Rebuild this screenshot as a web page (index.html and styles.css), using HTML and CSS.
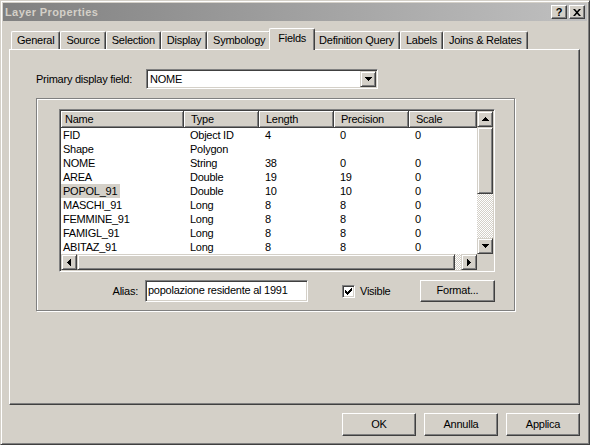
FILE: index.html
```html
<!DOCTYPE html>
<html>
<head>
<meta charset="utf-8">
<title>Layer Properties</title>
<link rel="stylesheet" href="styles.css">
</head>
<body>
<div class="window">
  <div class="titlebar">
    <span class="title">Layer Properties</span>
    <div class="caption-buttons">
      <div class="cap-btn help">?</div>
      <div class="cap-btn">
        <svg width="8" height="7" viewBox="0 0 8 7"><path d="M0 0h2l2 2.2 2-2.2h2L5 3.5 8 7H6L4 4.8 2 7H0l3-3.5z" fill="#000"/></svg>
      </div>
    </div>
  </div>

  <div class="tabbar">
    <div class="tab">General</div>
    <div class="tab">Source</div>
    <div class="tab">Selection</div>
    <div class="tab">Display</div>
    <div class="tab">Symbology</div>
    <div class="tab selected">Fields</div>
    <div class="tab">Definition Query</div>
    <div class="tab">Labels</div>
    <div class="tab">Joins &amp; Relates</div>
  </div>

  <div class="panel">
    <div class="primary-row">
      <span class="primary-label">Primary display field:</span>
      <div class="combo">
        <span class="combo-text">NOME</span>
        <span class="raised combo-btn">
          <svg width="7" height="4" viewBox="0 0 7 4" shape-rendering="crispEdges"><path d="M0 0h7v1h-1v1h-1v1h-1v1h-1v-1h-1v-1h-1v-1h-1z" fill="#000"/></svg>
        </span>
      </div>
    </div>

    <div class="groupbox">
      <div class="listview">
        <div class="lv-content">
          <div class="lv-header cols">
            <div class="hd c1">Name</div>
            <div class="hd">Type</div>
            <div class="hd">Length</div>
            <div class="hd">Precision</div>
            <div class="hd">Scale</div>
          </div>
          <div class="lv-row cols"><span class="name">FID</span><span class="cell">Object ID</span><span class="cell">4</span><span class="cell">0</span><span class="cell">0</span></div>
          <div class="lv-row cols"><span class="name">Shape</span><span class="cell">Polygon</span><span class="cell"></span><span class="cell"></span><span class="cell"></span></div>
          <div class="lv-row cols"><span class="name">NOME</span><span class="cell">String</span><span class="cell">38</span><span class="cell">0</span><span class="cell">0</span></div>
          <div class="lv-row cols"><span class="name">AREA</span><span class="cell">Double</span><span class="cell">19</span><span class="cell">19</span><span class="cell">0</span></div>
          <div class="lv-row cols"><span class="name"><span class="sel">POPOL_91</span></span><span class="cell">Double</span><span class="cell">10</span><span class="cell">10</span><span class="cell">0</span></div>
          <div class="lv-row cols"><span class="name">MASCHI_91</span><span class="cell">Long</span><span class="cell">8</span><span class="cell">8</span><span class="cell">0</span></div>
          <div class="lv-row cols"><span class="name">FEMMINE_91</span><span class="cell">Long</span><span class="cell">8</span><span class="cell">8</span><span class="cell">0</span></div>
          <div class="lv-row cols"><span class="name">FAMIGL_91</span><span class="cell">Long</span><span class="cell">8</span><span class="cell">8</span><span class="cell">0</span></div>
          <div class="lv-row cols"><span class="name">ABITAZ_91</span><span class="cell">Long</span><span class="cell">8</span><span class="cell">8</span><span class="cell">0</span></div>
        </div>
        <div class="vscroll">
          <div class="raised sb-btn">
            <svg width="7" height="4" viewBox="0 0 7 4" shape-rendering="crispEdges"><path d="M3 0h1v1h1v1h1v1h1v1h-7v-1h1v-1h1v-1h1z" fill="#000"/></svg>
          </div>
          <div class="raised vthumb"></div>
          <div class="track"></div>
          <div class="raised sb-btn">
            <svg width="7" height="4" viewBox="0 0 7 4" shape-rendering="crispEdges"><path d="M0 0h7v1h-1v1h-1v1h-1v1h-1v-1h-1v-1h-1v-1h-1z" fill="#000"/></svg>
          </div>
        </div>
        <div class="hscroll">
          <div class="raised sb-btn">
            <svg width="4" height="7" viewBox="0 0 4 7" shape-rendering="crispEdges"><path d="M3 0h1v7h-1v-1h-1v-1h-1v-1h-1v-1h1v-1h1v-1h1z" fill="#000"/></svg>
          </div>
          <div class="raised hthumb"></div>
          <div class="track htrack"></div>
          <div class="raised sb-btn">
            <svg width="4" height="7" viewBox="0 0 4 7" shape-rendering="crispEdges"><path d="M0 0h1v1h1v1h1v1h1v1h-1v1h-1v1h-1v1h-1z" fill="#000"/></svg>
          </div>
        </div>
        <div class="corner"></div>
      </div>

      <div class="alias-row">
        <span class="alias-label">Alias:</span>
        <div class="textbox">popolazione residente al 1991</div>
        <div class="check-group">
          <span class="checkbox">
            <svg width="7" height="7" viewBox="0 0 7 7" shape-rendering="crispEdges"><path d="M6 0h1v3h-1v1h-1v1h-1v1h-1v1h-1v-1h-1v-1h-1v-3h1v1h1v1h1v-1h1v-1h1v-1h1z" fill="#000"/></svg>
          </span>
          <span>Visible</span>
        </div>
        <div class="btn format">Format...</div>
      </div>
    </div>
  </div>

  <div class="footer">
    <div class="btn">OK</div>
    <div class="btn">Annulla</div>
    <div class="btn">Applica</div>
  </div>
</div>
</body>
</html>
```

FILE: styles.css
```css
* { box-sizing: border-box; }
html, body { margin: 0; padding: 0; }
body {
  background: #d4d0c8;
  font-family: "Liberation Sans", Arial, sans-serif;
  font-size: 11px;
  letter-spacing: -0.25px;
  color: #000;
}

.window {
  width: 590px;
  height: 445px;
  border: 1px solid;
  border-color: #d4d0c8 #404040 #404040 #d4d0c8;
  box-shadow: inset 1px 1px #fff, inset -1px -1px #808080;
  padding: 2px;
  display: flex;
  flex-direction: column;
}

/* title bar */
.titlebar {
  height: 18px;
  flex: none;
  display: flex;
  align-items: center;
  justify-content: space-between;
  padding: 0 2px;
  background: linear-gradient(to right, #808080, #c0c0c0);
}
.title {
  font-weight: bold;
  color: #d4d0c8;
  letter-spacing: 0.4px;
}
.caption-buttons { display: flex; gap: 2px; }
.cap-btn {
  width: 16px;
  height: 14px;
  background: #d4d0c8;
  border: 1px solid;
  border-color: #fff #404040 #404040 #fff;
  box-shadow: inset -1px -1px #808080;
  display: flex;
  align-items: center;
  justify-content: center;
  font-weight: bold;
  font-size: 11px;
  line-height: 12px;
}

/* tabs */
.tabbar {
  height: 28px;
  flex: none;
  display: flex;
  align-items: flex-end;
  padding-left: 8px;
}
.tab {
  height: 18px;
  padding: 0 5px;
  border: 1px solid;
  border-bottom: 0;
  border-color: #fff #404040 #fff #fff;
  box-shadow: inset -1px 0 #808080;
  border-radius: 2px 2px 0 0;
  line-height: 17px;
  white-space: nowrap;
  background: #d4d0c8;
}
.tab.selected {
  height: 22px;
  margin: 0 -2px -1px;
  padding: 0 8px;
  position: relative;
  z-index: 1;
  line-height: 19px;
}

/* main panel */
.panel {
  flex: none;
  margin-left: 6px;
  width: 571px;
  height: 356px;
  border: 1px solid;
  border-color: #fff #404040 #404040 #fff;
  box-shadow: inset -1px -1px #808080;
  padding: 19px 0 0 26px;
}

.primary-row {
  display: flex;
  align-items: center;
  height: 20px;
}
.primary-label { width: 110px; }
.combo {
  width: 232px;
  height: 20px;
  background: #fff;
  border: 1px solid;
  border-color: #808080 #fff #fff #808080;
  box-shadow: inset 1px 1px #404040, inset -1px -1px #d4d0c8;
  padding: 1px;
  display: flex;
}
.combo-text {
  flex: 1;
  padding-left: 2px;
  line-height: 16px;
}
.raised {
  background: #d4d0c8;
  border: 1px solid;
  border-color: #d4d0c8 #404040 #404040 #d4d0c8;
  box-shadow: inset 1px 1px #fff, inset -1px -1px #808080;
}
.combo-btn {
  width: 16px;
  height: 16px;
  display: flex;
  align-items: center;
  justify-content: center;
}

/* group box */
.groupbox {
  margin-top: 9px;
  width: 479px;
  height: 213px;
  border: 1px solid #808080;
  box-shadow: inset 1px 1px #fff, 1px 1px #fff;
  padding: 10px 0 0 22px;
}

/* list view */
.listview {
  width: 436px;
  height: 163px;
  background: #fff;
  border: 1px solid;
  border-color: #808080 #fff #fff #808080;
  box-shadow: inset 1px 1px #404040, inset -1px -1px #d4d0c8;
  padding: 1px;
  display: grid;
  grid-template-columns: 1fr 16px;
  grid-template-rows: 1fr 16px;
}
.lv-content { overflow: hidden; }
.cols {
  display: grid;
  grid-template-columns: 123px 75px 75px 75px 1fr;
}
.hd {
  height: 17px;
  background: #d4d0c8;
  border-right: 1px solid #404040;
  border-bottom: 1px solid #404040;
  box-shadow: inset 1px 1px #fff, inset -1px -1px #808080;
  padding-left: 7px;
  line-height: 16px;
  white-space: nowrap;
}
.hd.c1 { padding-left: 4px; }
.lv-row {
  height: 14px;
  line-height: 14px;
  white-space: nowrap;
}
.name { display: block; padding-left: 2px; }
.sel {
  display: inline-block;
  margin-left: -2px;
  padding: 0 3px 0 2px;
  background: #d4d0c8;
  line-height: 14px;
}
.cell { padding-left: 6px; }

.vscroll {
  display: flex;
  flex-direction: column;
}
.sb-btn {
  width: 16px;
  height: 16px;
  flex: none;
  display: flex;
  align-items: center;
  justify-content: center;
}
.vthumb { height: 67px; flex: none; }
.track {
  flex: 1;
  background-color: #d4d0c8;
  background-image: conic-gradient(#fff 25%, #d4d0c8 0 50%, #fff 0 75%, #d4d0c8 0);
  background-size: 2px 2px;
}
.hscroll { display: flex; }
.hthumb { flex: 1; }
.htrack { flex: none; width: 6px; }
.corner { background: #d4d0c8; }

/* alias row */
.alias-row {
  margin-top: 8px;
  width: 436px;
  height: 22px;
  display: flex;
  align-items: center;
}
.alias-label {
  width: 79px;
  text-align: right;
  margin-right: 7px;
}
.textbox {
  width: 163px;
  height: 22px;
  background: #fff;
  border: 1px solid;
  border-color: #808080 #fff #fff #808080;
  box-shadow: inset 1px 1px #404040, inset -1px -1px #d4d0c8;
  padding-left: 2px;
  line-height: 19px;
  white-space: nowrap;
}
.check-group {
  margin-left: 34px;
  display: flex;
  align-items: center;
  gap: 5px;
}
.checkbox {
  width: 13px;
  height: 13px;
  background: #fff;
  border: 1px solid;
  border-color: #808080 #fff #fff #808080;
  box-shadow: inset 1px 1px #404040, inset -1px -1px #d4d0c8;
  display: flex;
  align-items: center;
  justify-content: center;
}

.btn {
  width: 75px;
  height: 22px;
  background: #d4d0c8;
  border: 1px solid;
  border-color: #fff #404040 #404040 #fff;
  box-shadow: inset -1px -1px #808080;
  text-align: center;
  line-height: 19px;
}
.format { margin-left: auto; }

/* footer */
.footer {
  flex: none;
  margin-top: 8px;
  display: flex;
  justify-content: flex-end;
  gap: 8px;
  padding-right: 7px;
}
.footer .btn {
  width: 74px;
  height: 23px;
  line-height: 20px;
}
```
